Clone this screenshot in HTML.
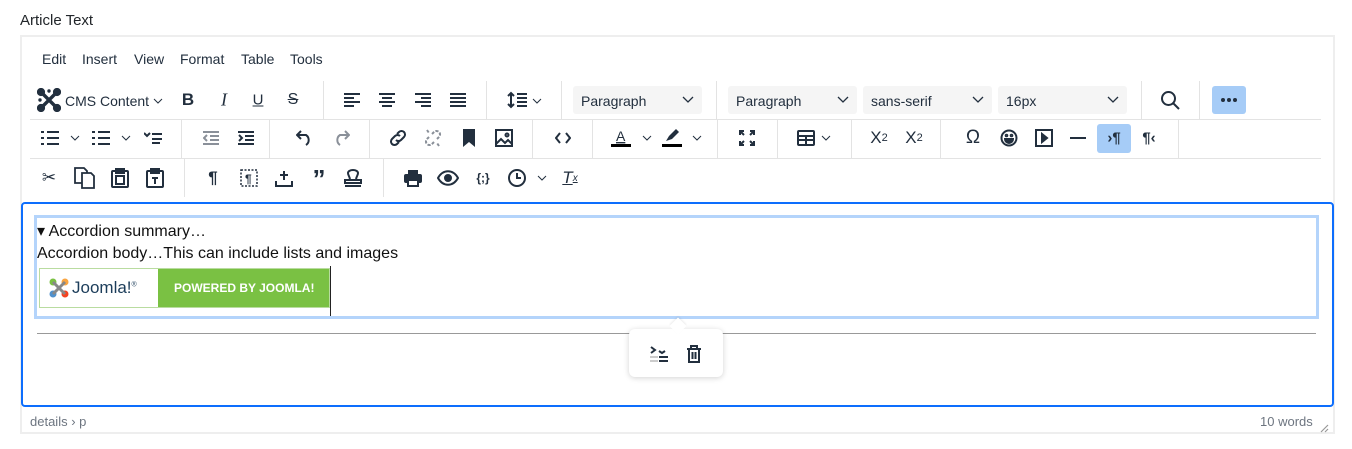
<!DOCTYPE html>
<html><head><meta charset="utf-8"><style>
*{margin:0;padding:0;box-sizing:border-box}
body{width:1352px;height:449px;background:#fff;position:relative;overflow:hidden;font-family:"Liberation Sans",sans-serif;color:#222f3e}
.a{position:absolute}
.lbl{left:20px;top:12px;font-size:15px;color:#22262a}
.box{left:20px;top:35px;width:1315px;height:399px;border:2px solid #eeeeee;border-top-width:2px}
.menu{top:51px;font-size:14px;color:#222f3e}
.hl{height:1px;background:#e3e3e3}
.vl{width:1px;background:#e3e3e3}
.ic{position:absolute;transform:translate(-50%,-50%);display:flex;align-items:center;justify-content:center}
.ic svg{display:block}
.sel{top:86px;height:28px;width:129px;background:#f5f5f5;border-radius:3px;font-size:14px;padding:7px 0 0 8px}
.sel svg{position:absolute;right:8px;top:10px}
.edit{left:21px;top:202px;width:1313px;height:205px;border:2px solid #0d6efd;border-radius:4px}
.det{left:34px;top:215px;width:1285px;height:104px;border:3px solid #b4d4fb}
.txt{font-size:16px;color:#111}
</style></head><body>
<div class="a lbl">Article Text</div>
<div class="a box"></div>
<div class="a menu" style="left:42px">Edit</div>
<div class="a menu" style="left:82px">Insert</div>
<div class="a menu" style="left:134px">View</div>
<div class="a menu" style="left:180px">Format</div>
<div class="a menu" style="left:241px">Table</div>
<div class="a menu" style="left:290px">Tools</div>

<div class="a hl" style="left:30px;top:119px;width:1291px"></div>
<div class="a hl" style="left:30px;top:158px;width:1291px"></div>
<!-- row separators -->
<div class="a vl" style="left:323px;top:81px;height:38px"></div>
<div class="a vl" style="left:486px;top:81px;height:38px"></div>
<div class="a vl" style="left:561px;top:81px;height:38px"></div>
<div class="a vl" style="left:716px;top:81px;height:38px"></div>
<div class="a vl" style="left:1141px;top:81px;height:38px"></div>
<div class="a vl" style="left:1199px;top:81px;height:38px"></div>
<div class="a vl" style="left:181px;top:120px;height:38px"></div>
<div class="a vl" style="left:269px;top:120px;height:38px"></div>
<div class="a vl" style="left:369px;top:120px;height:38px"></div>
<div class="a vl" style="left:532px;top:120px;height:38px"></div>
<div class="a vl" style="left:592px;top:120px;height:38px"></div>
<div class="a vl" style="left:717px;top:120px;height:38px"></div>
<div class="a vl" style="left:777px;top:120px;height:38px"></div>
<div class="a vl" style="left:851px;top:120px;height:38px"></div>
<div class="a vl" style="left:940px;top:120px;height:38px"></div>
<div class="a vl" style="left:1178px;top:120px;height:38px"></div>
<div class="a vl" style="left:184px;top:159px;height:38px"></div>
<div class="a vl" style="left:383px;top:159px;height:38px"></div>

<!-- ROW1 -->
<div class="ic" style="left:49px;top:100px"><svg width="24" height="24" viewBox="0 0 24 24" fill="none" stroke="#222f3e" stroke-width="3.4" stroke-linecap="round"><path d="M4 4l16 16M20 4L4 20M7 7l5 5M12 3v0M3 12v0"/><circle cx="4" cy="4" r="2.4" fill="#222f3e"/><circle cx="20" cy="4" r="2.4" fill="#222f3e"/><circle cx="4" cy="20" r="2.4" fill="#222f3e"/><circle cx="20" cy="20" r="2.4" fill="#222f3e"/></svg></div>
<div class="a" style="left:65px;top:93px;font-size:14px">CMS Content</div>
<div class="ic" style="left:158px;top:101px"><svg width="10" height="6"><path d="M1 1l4 4 4-4" stroke="#222f3e" fill="none"/></svg></div>
<div class="ic" style="left:188px;top:100px;font-weight:bold;font-size:17px">B</div>
<div class="ic" style="left:224px;top:100px;font-style:italic;font-size:18px;font-family:'Liberation Serif',serif">I</div>
<div class="ic" style="left:258px;top:100px;font-size:15px;text-decoration:underline">U</div>
<div class="ic" style="left:293px;top:100px;font-size:16px;text-decoration:line-through">S</div>
<div class="ic" style="left:352px;top:100px"><svg width="16" height="14" stroke="#222f3e" stroke-width="2"><path d="M0 1h16M0 5h10M0 9h16M0 13h10"/></svg></div>
<div class="ic" style="left:387px;top:100px"><svg width="16" height="14" stroke="#222f3e" stroke-width="2"><path d="M0 1h16M3 5h10M0 9h16M3 13h10"/></svg></div>
<div class="ic" style="left:423px;top:100px"><svg width="16" height="14" stroke="#222f3e" stroke-width="2"><path d="M0 1h16M6 5h10M0 9h16M6 13h10"/></svg></div>
<div class="ic" style="left:458px;top:100px"><svg width="16" height="14" stroke="#222f3e" stroke-width="2"><path d="M0 1h16M0 5h16M0 9h16M0 13h16"/></svg></div>
<div class="ic" style="left:517px;top:100px"><svg width="20" height="18" stroke="#222f3e" stroke-width="2" fill="none"><path d="M4 2v14M1 5l3-3 3 3M1 13l3 3 3-3M10 3h10M10 7h10M10 11h10M10 15h10"/></svg></div>
<div class="ic" style="left:537px;top:101px"><svg width="10" height="6"><path d="M1 1l4 4 4-4" stroke="#222f3e" fill="none"/></svg></div>
<div class="a sel" style="left:573px">Paragraph<svg width="12" height="7"><path d="M1 1l5 5 5-5" stroke="#222f3e" fill="none" stroke-width="1.3"/></svg></div>
<div class="a sel" style="left:728px">Paragraph<svg width="12" height="7"><path d="M1 1l5 5 5-5" stroke="#222f3e" fill="none" stroke-width="1.3"/></svg></div>
<div class="a sel" style="left:863px">sans-serif<svg width="12" height="7"><path d="M1 1l5 5 5-5" stroke="#222f3e" fill="none" stroke-width="1.3"/></svg></div>
<div class="a sel" style="left:998px">16px<svg width="12" height="7"><path d="M1 1l5 5 5-5" stroke="#222f3e" fill="none" stroke-width="1.3"/></svg></div>
<div class="ic" style="left:1170px;top:100px"><svg width="20" height="20" stroke="#222f3e" stroke-width="2" fill="none"><circle cx="8.5" cy="8.5" r="6.5"/><path d="M13 13l6 6"/></svg></div>
<div class="a" style="left:1212px;top:86px;width:34px;height:28px;background:#a6ccf7;border-radius:3px"></div>
<div class="ic" style="left:1229px;top:100px"><svg width="16" height="4" fill="#222f3e"><circle cx="2" cy="2" r="2"/><circle cx="8" cy="2" r="2"/><circle cx="14" cy="2" r="2"/></svg></div>

<!-- ROW2 -->
<div class="ic" style="left:50px;top:138px"><svg width="18" height="14" stroke="#222f3e" stroke-width="2"><path d="M0 1h3M0 7h3M0 13h3M6 1h12M6 7h12M6 13h12"/></svg></div>
<div class="ic" style="left:75px;top:138px"><svg width="10" height="6"><path d="M1 1l4 4 4-4" stroke="#222f3e" fill="none"/></svg></div>
<div class="ic" style="left:101px;top:138px"><svg width="18" height="16" stroke="#222f3e" stroke-width="2"><path d="M0 2h3M0 8h3M0 14h3M6 2h12M6 8h12M6 14h12"/></svg></div>
<div class="ic" style="left:126px;top:138px"><svg width="10" height="6"><path d="M1 1l4 4 4-4" stroke="#222f3e" fill="none"/></svg></div>
<div class="ic" style="left:153px;top:138px"><svg width="18" height="12" stroke="#222f3e" stroke-width="2" fill="none"><path d="M0 1l3 3 3-3M8 2h10M8 7h10M8 11h8"/></svg></div>
<div class="ic" style="left:211px;top:138px"><svg width="16" height="14" stroke="#8a9099" stroke-width="2" fill="none"><path d="M0 1h16M7 5h9M7 9h9M0 13h16M4 4l-3 3 3 3"/></svg></div>
<div class="ic" style="left:246px;top:138px"><svg width="16" height="14" stroke="#222f3e" stroke-width="2" fill="none"><path d="M0 1h16M7 5h9M7 9h9M0 13h16M1 4l3 3-3 3"/></svg></div>
<div class="ic" style="left:305px;top:138px"><svg width="18" height="16" stroke="#222f3e" stroke-width="2" fill="none"><path d="M5 1L1 5l4 4M1 5h9a6 6 0 010 10"/></svg></div>
<div class="ic" style="left:341px;top:138px"><svg width="18" height="16" stroke="#8a9099" stroke-width="2" fill="none"><path d="M13 1l4 4-4 4M17 5H8a6 6 0 000 10"/></svg></div>
<div class="ic" style="left:398px;top:138px"><svg width="18" height="18" stroke="#222f3e" stroke-width="2" fill="none"><path d="M8 5l2-2a3.5 3.5 0 015 5l-3 3a3.5 3.5 0 01-5 0M10 13l-2 2a3.5 3.5 0 01-5-5l3-3a3.5 3.5 0 015 0"/></svg></div>
<div class="ic" style="left:433px;top:138px"><svg width="18" height="18" stroke="#8a9099" stroke-width="2" fill="none" stroke-dasharray="3 1.5"><path d="M8 5l2-2a3.5 3.5 0 015 5l-3 3M10 13l-2 2a3.5 3.5 0 01-5-5l3-3M3 1l2 3M15 17l-2-3"/></svg></div>
<div class="ic" style="left:469px;top:138px"><svg width="12" height="18" fill="#222f3e"><path d="M0 0h12v18l-6-5-6 5z"/></svg></div>
<div class="ic" style="left:504px;top:138px"><svg width="18" height="18" stroke="#222f3e" stroke-width="2" fill="none"><rect x="1" y="1" width="16" height="16"/><path d="M1 15l5-5 4 4 3-3 4 4"/><circle cx="12" cy="6" r="1.5"/></svg></div>
<div class="ic" style="left:563px;top:138px"><svg width="16" height="12" stroke="#222f3e" stroke-width="2" fill="none"><path d="M5 1L1 6l4 5M11 1l4 5-4 5"/></svg></div>
<div class="ic" style="left:621px;top:138px"><svg width="20" height="20"><text x="5" y="13" font-size="14" font-family="Liberation Sans" fill="#222f3e" text-decoration="underline">A</text><rect x="0" y="16" width="20" height="3" fill="#000"/></svg></div>
<div class="ic" style="left:647px;top:138px"><svg width="10" height="6"><path d="M1 1l4 4 4-4" stroke="#222f3e" fill="none"/></svg></div>
<div class="ic" style="left:672px;top:138px"><svg width="20" height="20"><path d="M4 13l3-5 7-7 3 3-7 7z" fill="#222f3e"/><rect x="0" y="16" width="20" height="3" fill="#000"/></svg></div>
<div class="ic" style="left:697px;top:138px"><svg width="10" height="6"><path d="M1 1l4 4 4-4" stroke="#222f3e" fill="none"/></svg></div>
<div class="ic" style="left:747px;top:138px"><svg width="16" height="16" stroke="#222f3e" stroke-width="2" fill="none"><path d="M1 5V1h4M11 1h4v4M15 11v4h-4M5 15H1v-4M2 2l3 3M14 2l-3 3M14 14l-3-3M2 14l3-3"/></svg></div>
<div class="ic" style="left:806px;top:138px"><svg width="18" height="16" stroke="#222f3e" stroke-width="2" fill="none"><rect x="1" y="1" width="16" height="14" rx="1"/><path d="M1 6h16M9 6v9M1 10h16"/></svg></div>
<div class="ic" style="left:826px;top:138px"><svg width="10" height="6"><path d="M1 1l4 4 4-4" stroke="#222f3e" fill="none"/></svg></div>
<div class="ic" style="left:879px;top:138px;font-size:17px">X<sub style="font-size:11px">2</sub></div>
<div class="ic" style="left:914px;top:138px;font-size:17px">X<sup style="font-size:11px">2</sup></div>
<div class="ic" style="left:973px;top:138px;font-size:19px">Ω</div>
<div class="ic" style="left:1009px;top:138px"><svg width="18" height="18" stroke="#222f3e" stroke-width="2" fill="none"><circle cx="9" cy="9" r="7.5"/><path d="M5 10a4 4 0 008 0z" fill="#222f3e"/><circle cx="6.5" cy="6.5" r=".8"/><circle cx="11.5" cy="6.5" r=".8"/></svg></div>
<div class="ic" style="left:1044px;top:138px"><svg width="18" height="18" stroke="#222f3e" stroke-width="2" fill="none"><rect x="1" y="1" width="16" height="16"/><path d="M7 5v8l5-4z" fill="#222f3e"/></svg></div>
<div class="ic" style="left:1078px;top:138px"><svg width="16" height="2"><rect width="16" height="2" fill="#222f3e"/></svg></div>
<div class="a" style="left:1097px;top:124px;width:34px;height:29px;background:#a6ccf7;border-radius:3px"></div>
<div class="ic" style="left:1114px;top:138px;font-size:15px;font-weight:bold">›¶</div>
<div class="ic" style="left:1149px;top:138px;font-size:15px;font-weight:bold">¶‹</div>

<!-- ROW3 -->
<div class="ic" style="left:49px;top:178px;font-size:17px">✂</div>
<div class="ic" style="left:85px;top:178px"><svg width="22" height="22" stroke="#222f3e" stroke-width="1.8" fill="#fff"><path d="M1 1h9l3 3v12H1z"/><path d="M8 6h9l3 3v12H8z"/></svg></div>
<div class="ic" style="left:120px;top:178px"><svg width="18" height="20" stroke="#222f3e" stroke-width="2" fill="none"><rect x="1" y="3" width="16" height="16" rx="1"/><rect x="5" y="1" width="8" height="4"/><rect x="5" y="8" width="8" height="8"/></svg></div>
<div class="ic" style="left:155px;top:178px"><svg width="18" height="20" stroke="#222f3e" stroke-width="2" fill="none"><rect x="1" y="3" width="16" height="16" rx="1"/><rect x="5" y="1" width="8" height="4"/><path d="M6 10h6M9 10v6"/></svg></div>
<div class="ic" style="left:213px;top:178px;font-size:17px;font-weight:bold">¶</div>
<div class="ic" style="left:249px;top:178px"><svg width="18" height="18"><rect x="1" y="1" width="16" height="16" fill="none" stroke="#222f3e" stroke-width="1.5" stroke-dasharray="2 1.5"/><text x="5" y="14" font-size="12" font-weight="bold" fill="#222f3e" font-family="Liberation Sans">¶</text></svg></div>
<div class="ic" style="left:284px;top:178px"><svg width="18" height="18" stroke="#222f3e" stroke-width="2" fill="none"><path d="M9 2v9M5 6h8M1 12v5h16v-5"/></svg></div>
<div class="ic" style="left:319px;top:179px;font-size:26px;font-weight:bold;height:14px;line-height:26px">”</div>
<div class="ic" style="left:353px;top:178px"><svg width="18" height="18" stroke="#222f3e" stroke-width="2" fill="none"><path d="M6 11c0-4-2-4-2-7a5 3 0 0110 0c0 3-2 3-2 7zM1 11h16v3H1zM1 17h16"/></svg></div>
<div class="ic" style="left:413px;top:178px"><svg width="20" height="18" fill="#222f3e"><rect x="5" y="1" width="10" height="4"/><rect x="1" y="5" width="18" height="9" rx="2"/><rect x="5" y="11" width="10" height="6" fill="#fff" stroke="#222f3e" stroke-width="2"/></svg></div>
<div class="ic" style="left:448px;top:178px"><svg width="22" height="16" stroke="#222f3e" stroke-width="2" fill="none"><path d="M1 8c5-9 15-9 20 0-5 9-15 9-20 0z"/><circle cx="11" cy="8" r="3" fill="#222f3e"/></svg></div>
<div class="ic" style="left:483px;top:178px;font-size:12px;font-weight:bold">{;}</div>
<div class="ic" style="left:517px;top:178px"><svg width="20" height="20" stroke="#222f3e" stroke-width="2" fill="none"><circle cx="10" cy="10" r="8"/><path d="M10 5v5h4"/></svg></div>
<div class="ic" style="left:542px;top:178px"><svg width="10" height="6"><path d="M1 1l4 4 4-4" stroke="#222f3e" fill="none"/></svg></div>
<div class="ic" style="left:570px;top:178px;font-size:17px;font-style:italic;text-decoration:underline">T<span style="font-size:10px">x</span></div>

<!-- editor -->
<div class="a edit"></div>
<div class="a det"></div>
<div class="a txt" style="left:37px;top:221px">▾ Accordion summary…</div>
<div class="a txt" style="left:37px;top:245px">Accordion body…This can include lists and images</div>
<div class="a" style="left:39px;top:268px;width:291px;height:40px;background:#7ac143;border:1px solid #b9dca0"></div>
<div class="a" style="left:40px;top:269px;width:118px;height:38px;background:#fff"></div>
<div class="a" style="left:48px;top:277px"><svg width="22" height="22"><circle cx="5" cy="5" r="3.5" fill="#7ac143"/><circle cx="17" cy="5" r="3.5" fill="#f9a541"/><circle cx="5" cy="17" r="3.5" fill="#5091cd"/><circle cx="17" cy="17" r="3.5" fill="#f44321"/><path d="M5 5l12 12M17 5L5 17" stroke="#888" stroke-width="3"/></svg></div>
<div class="a" style="left:72px;top:278px;font-size:17px;color:#1c3d5a">Joomla!<sup style="font-size:7px">®</sup></div>
<div class="a" style="left:174px;top:281px;font-size:12px;font-weight:bold;color:#fff">POWERED BY JOOMLA!</div>
<div class="a" style="left:330px;top:266px;width:1px;height:50px;background:#222"></div>
<div class="a" style="left:37px;top:333px;width:1279px;height:1px;background:#999"></div>
<div class="a" style="left:629px;top:329px;width:94px;height:48px;background:#fff;border-radius:6px;box-shadow:0 1px 6px rgba(0,0,0,.18)"></div>
<div class="a" style="left:672px;top:320px;width:12px;height:12px;background:#fff;transform:rotate(45deg);box-shadow:-1px -1px 2px rgba(0,0,0,.08)"></div>
<div class="ic" style="left:659px;top:354px"><svg width="18" height="16" stroke-width="2" fill="none"><path d="M1 1l4 3-4 3" stroke="#222f3e"/><path d="M9 5l3 2 3-2" stroke="#222f3e"/><path d="M0 11h8M0 15h8" stroke="#ccc"/><path d="M9 11h9M9 15h9" stroke="#222f3e"/></svg></div>
<div class="ic" style="left:694px;top:354px"><svg width="16" height="18" stroke="#222f3e" stroke-width="2" fill="none"><path d="M1 4h14M5 4V1h6v3M3 4v13h10V4M6.5 7v7M9.5 7v7"/></svg></div>

<!-- status -->
<div class="a" style="left:30px;top:414px;font-size:13px;color:#6d7580">details › p</div>
<div class="a" style="left:1260px;top:414px;font-size:13px;color:#6d7580">10 words</div>
<div class="a" style="left:1320px;top:420px"><svg width="9" height="9" stroke="#999" stroke-width="1.2"><path d="M1 8l7-7M5 8l3-3"/></svg></div>
</body></html>
